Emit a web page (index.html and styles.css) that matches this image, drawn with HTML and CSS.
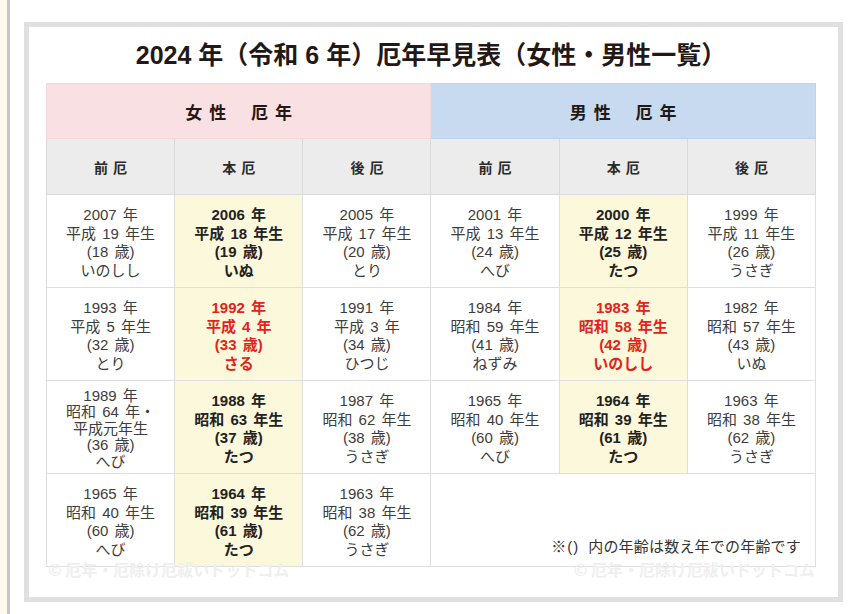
FILE: index.html
```html
<!DOCTYPE html>
<html lang="ja">
<head>
<meta charset="utf-8">
<title>2024年 厄年早見表</title>
<link rel="stylesheet" href="styles.css">
</head>
<body>
<div class="strip"></div>
<div class="frame">
  <div class="sheet">
    <h1 class="title">2024 年（令和 6 年）厄年早見表（女性・男性一覧）</h1>
    <div class="tablewrap">
      <table class="yakudoshi">
        <colgroup>
          <col><col><col><col><col><col>
        </colgroup>
        <thead>
          <tr class="sex-row">
            <th colspan="3" class="female">女性 厄年</th>
            <th colspan="3" class="male">男性 厄年</th>
          </tr>
          <tr class="kind-row">
            <th>前厄</th><th>本厄</th><th>後厄</th>
            <th>前厄</th><th>本厄</th><th>後厄</th>
          </tr>
        </thead>
        <tbody>
          <tr>
            <td>2007 年<br>平成 19 年生<br>(18 歳)<br>いのしし</td>
            <td class="hon">2006 年<br>平成 18 年生<br>(19 歳)<br>いぬ</td>
            <td>2005 年<br>平成 17 年生<br>(20 歳)<br>とり</td>
            <td>2001 年<br>平成 13 年生<br>(24 歳)<br>へび</td>
            <td class="hon">2000 年<br>平成 12 年生<br>(25 歳)<br>たつ</td>
            <td>1999 年<br>平成 11 年生<br>(26 歳)<br>うさぎ</td>
          </tr>
          <tr>
            <td>1993 年<br>平成 5 年生<br>(32 歳)<br>とり</td>
            <td class="hon taiyaku">1992 年<br>平成 4 年<br>(33 歳)<br>さる</td>
            <td>1991 年<br>平成 3 年<br>(34 歳)<br>ひつじ</td>
            <td>1984 年<br>昭和 59 年生<br>(41 歳)<br>ねずみ</td>
            <td class="hon taiyaku">1983 年<br>昭和 58 年生<br>(42 歳)<br>いのしし</td>
            <td>1982 年<br>昭和 57 年生<br>(43 歳)<br>いぬ</td>
          </tr>
          <tr>
            <td class="five">1989 年<br>昭和 64 年・<br>平成元年生<br>(36 歳)<br>へび</td>
            <td class="hon">1988 年<br>昭和 63 年生<br>(37 歳)<br>たつ</td>
            <td>1987 年<br>昭和 62 年生<br>(38 歳)<br>うさぎ</td>
            <td>1965 年<br>昭和 40 年生<br>(60 歳)<br>へび</td>
            <td class="hon">1964 年<br>昭和 39 年生<br>(61 歳)<br>たつ</td>
            <td>1963 年<br>昭和 38 年生<br>(62 歳)<br>うさぎ</td>
          </tr>
          <tr>
            <td>1965 年<br>昭和 40 年生<br>(60 歳)<br>へび</td>
            <td class="hon">1964 年<br>昭和 39 年生<br>(61 歳)<br>たつ</td>
            <td>1963 年<br>昭和 38 年生<br>(62 歳)<br>うさぎ</td>
            <td colspan="3" class="note"><span class="mark">※()</span>内の年齢は数え年での年齢です</td>
          </tr>
        </tbody>
      </table>
      <span class="watermark wm-left">© 厄年・厄除け厄祓いドットコム</span>
      <span class="watermark wm-right">© 厄年・厄除け厄祓いドットコム</span>
    </div>
  </div>
</div>
</body>
</html>
```

FILE: styles.css
```css
html, body {
  height: 100%;
}
body {
  margin: 0;
  display: flex;
  align-items: flex-start;
  background: #ffffff;
  font-family: "Liberation Sans", "Noto Sans CJK JP", sans-serif;
  color: #333333;
}
.strip {
  align-self: stretch;
  width: 7px;
  background: #fff8ed;
  border-right: 3px solid #c6c6c6;
  flex: none;
}
.frame {
  flex: none;
  box-sizing: border-box;
  width: 819px;
  height: 580px;
  margin: 22px 0 0 14px;
  border: 5px solid #e0e0e0;
  background: #ffffff;
  padding: 14px 22px 0 17px;
}
.sheet {
  width: 770px;
}
.title {
  margin: 0 0 14px;
  height: 28px;
  font-size: 25px;
  line-height: 28px;
  font-weight: 700;
  text-align: center;
  color: #231815;
  letter-spacing: 0;
}
.tablewrap {
  position: relative;
}
.yakudoshi {
  width: 770px;
  border-collapse: collapse;
  table-layout: fixed;
}
.yakudoshi th,
.yakudoshi td {
  padding: 0;
  text-align: center;
}
.sex-row th {
  height: 54px;
  font-size: 17px;
  font-weight: 700;
  letter-spacing: 7px;
  word-spacing: 6px;
  color: #231815;
  padding-left: 7px;
}
.sex-row .female {
  background: #f9e1e3;
  border: 1px solid #f3d8da;
}
.sex-row .male {
  background: #c7daf0;
  border: 1px solid #bfd3ea;
}
.kind-row th {
  height: 55px;
  background: #ececec;
  border: 1px solid #d9d9d9;
  font-size: 14px;
  font-weight: 700;
  letter-spacing: 5px;
  padding-left: 5px;
  color: #2a2a2a;
}
.yakudoshi td {
  height: 88px;
  padding-top: 4px;
  border: 1px solid #dedede;
  font-size: 15px;
  line-height: 18.5px;
  color: #3d3d3d;
  word-spacing: 2px;
}
.yakudoshi td.five {
  line-height: 16.5px;
}
.yakudoshi td.hon {
  background: #fcf8dc;
  font-weight: 700;
  color: #222222;
}
.yakudoshi td.taiyaku {
  color: #e2231a;
}
.yakudoshi td.note {
  height: 83px;
  padding: 0 14px 9px 0;
  vertical-align: bottom;
  text-align: right;
  font-size: 15px;
  line-height: 20px;
  letter-spacing: 0.2px;
  color: #333333;
}
.mark {
  letter-spacing: 1px;
  margin-right: 9px;
}
.watermark {
  position: absolute;
  top: 476px;
  font-family: "Noto Sans CJK JP", sans-serif;
  font-size: 16px;
  line-height: 20px;
  font-weight: 700;
  color: #efefef;
  white-space: nowrap;
}
.wm-left {
  left: 2px;
}
.wm-right {
  right: 1px;
}
```
